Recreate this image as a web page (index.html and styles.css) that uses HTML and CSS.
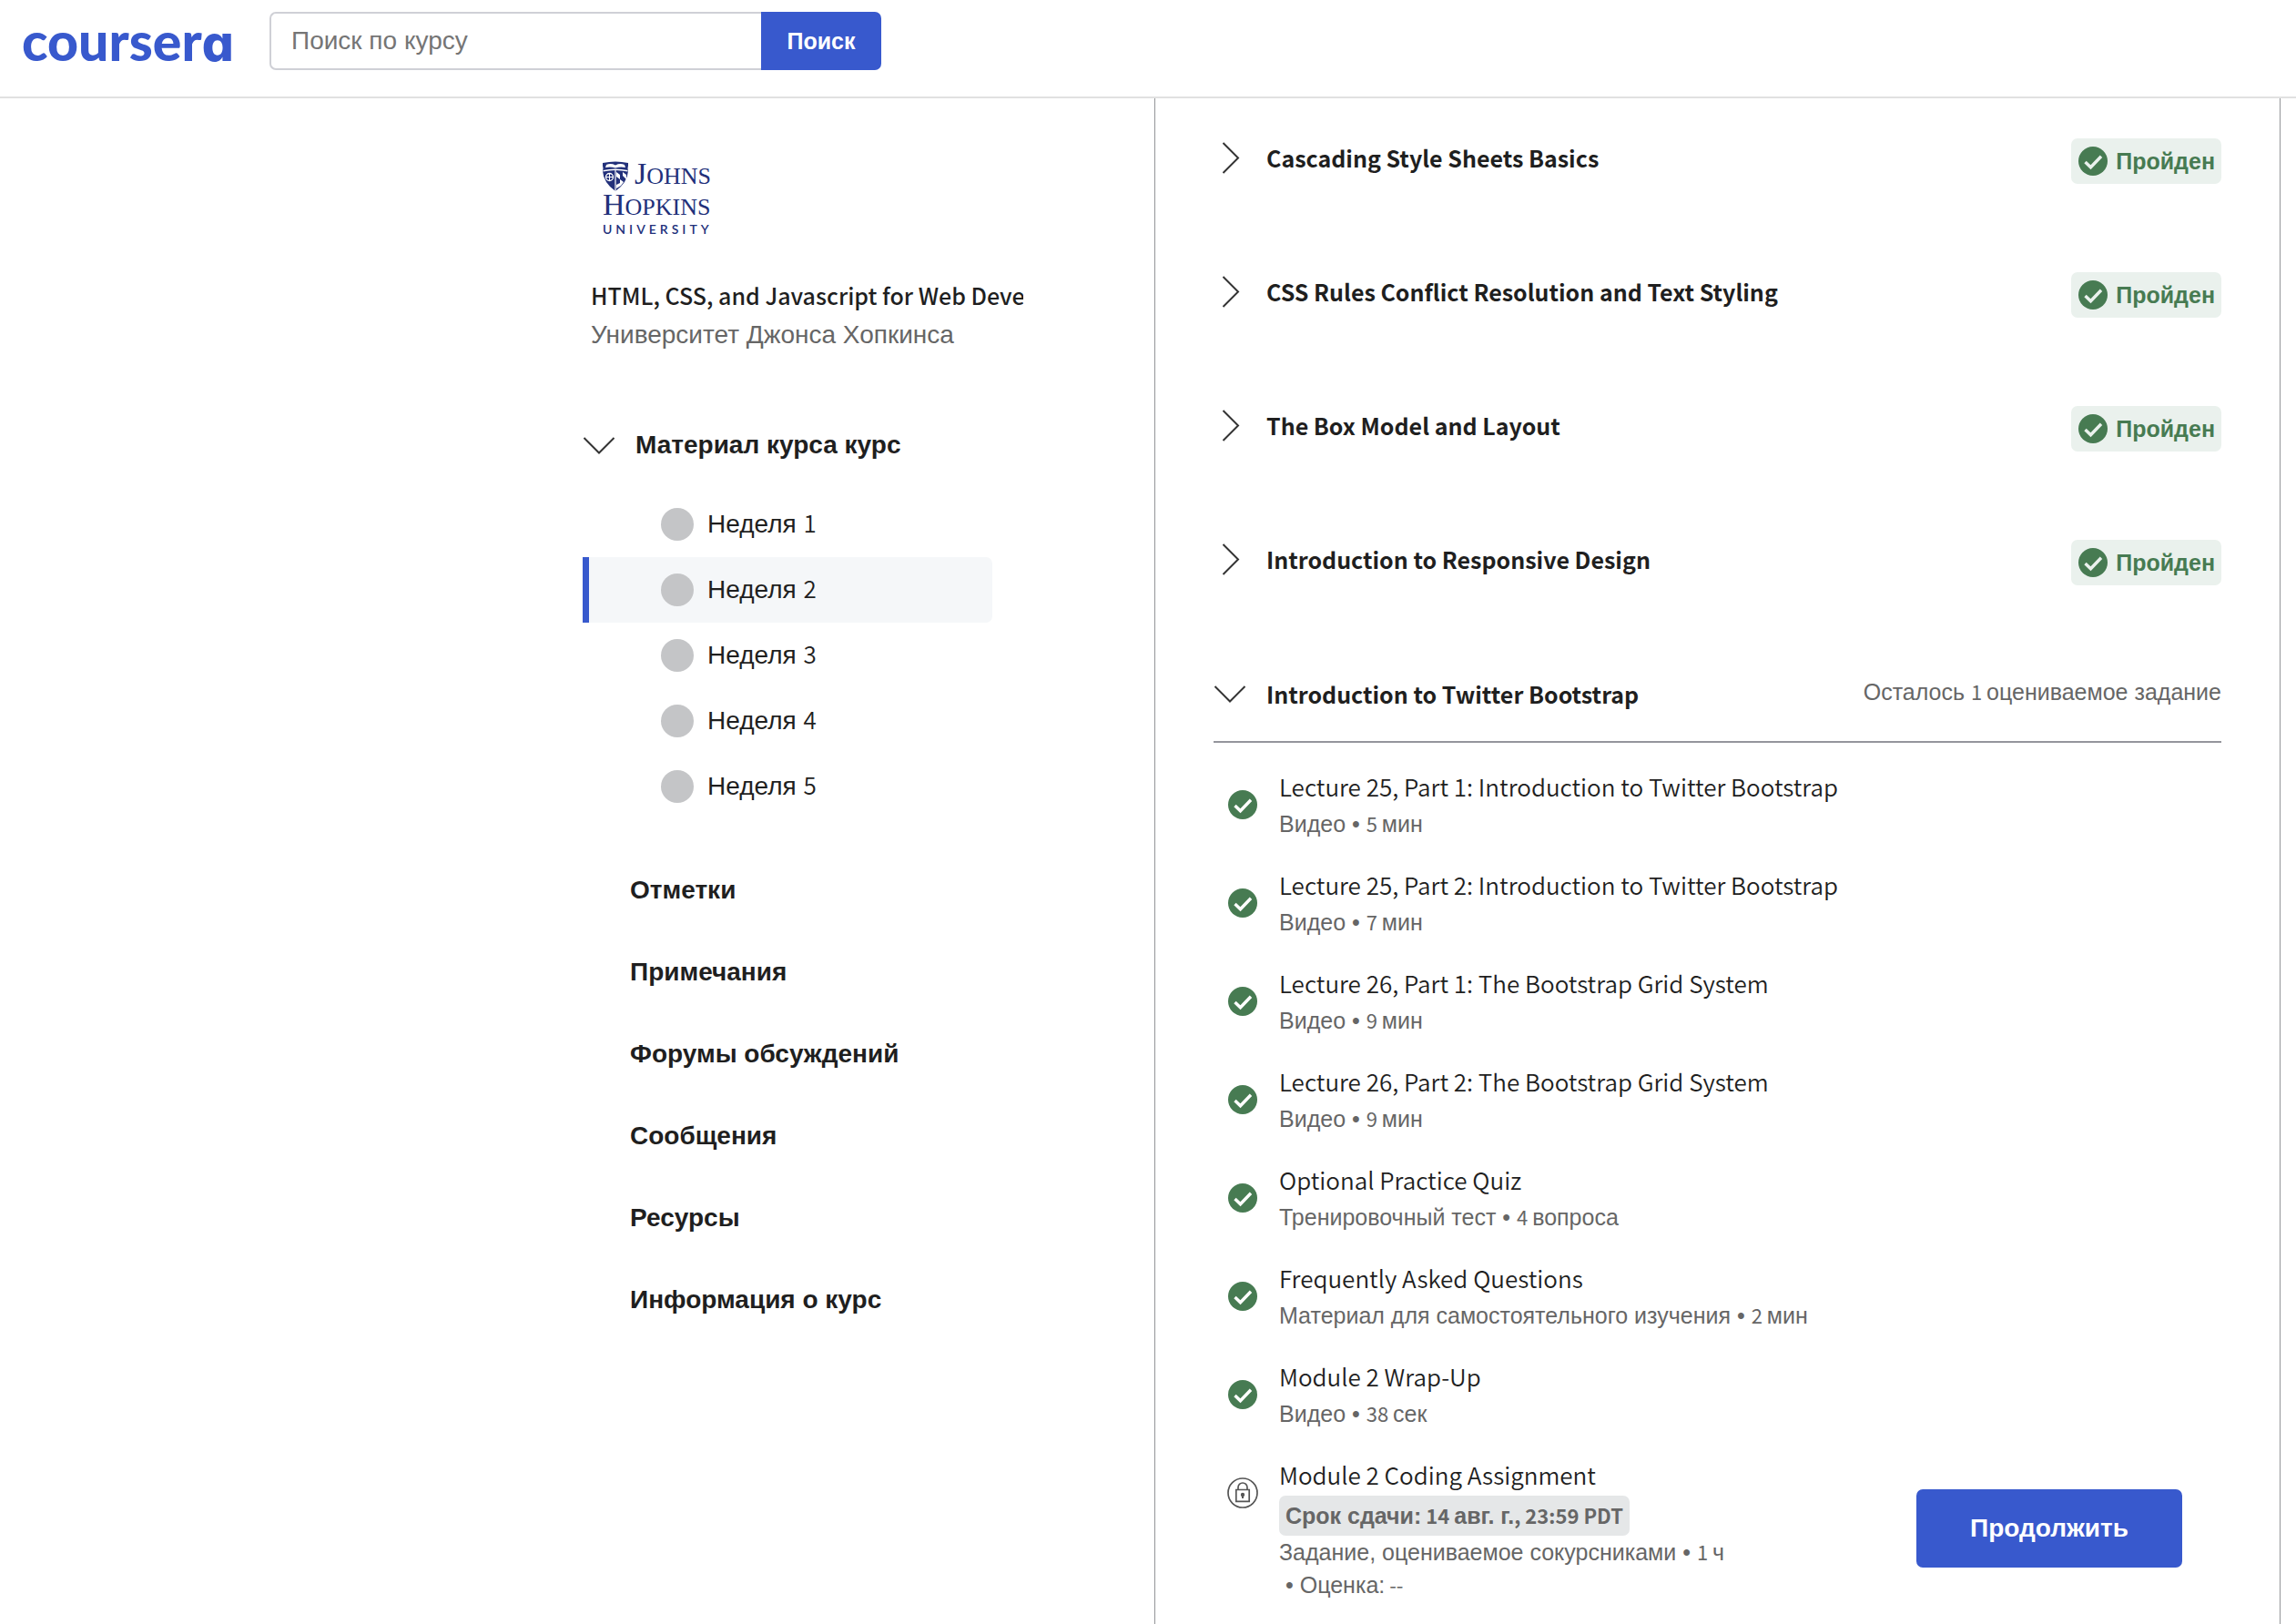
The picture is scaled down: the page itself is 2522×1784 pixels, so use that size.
FILE: index.html
```html
<!DOCTYPE html>
<html lang="ru">
<head>
<meta charset="utf-8">
<meta name="viewport" content="width=device-width, initial-scale=1">
<title>HTML, CSS, and Javascript for Web Developers | Coursera</title>
<link rel="stylesheet" href="styles.css">
</head>
<body>
<svg class="sprite" aria-hidden="true">
  <symbol id="chevron-right" viewBox="0 0 36 36"><path d="M10.500 2 27 18.500 10.500 35" fill="none" stroke="currentColor" stroke-width="2"/></symbol>
  <symbol id="chevron-down" viewBox="0 0 36 36"><path d="M1.500 10 18 26.500 34.500 10" fill="none" stroke="currentColor" stroke-width="2"/></symbol>
  <symbol id="check" viewBox="0 0 32 32"><circle cx="16" cy="16" r="16" fill="currentColor"/><path d="M7.500 17 13.500 22.800 25 10.800" fill="none" stroke="var(--tick)" stroke-width="3.400"/></symbol>
  <symbol id="lock" viewBox="0 0 34 34"><g fill="none" stroke="currentColor" stroke-width="1.700"><circle cx="17" cy="17" r="16"/><path d="M9.800 13.500H24.200V26.300H9.800ZM12 13.500V11a5 5 0 0 1 10 0V13.500"/></g><circle cx="17" cy="19" r="2.200" fill="currentColor"/><path d="M16 19h2v4h-2z" fill="currentColor"/></symbol>
</svg>

<header class="topbar">
  <a class="brand" href="#" aria-label="coursera">courser<span class="brand-a">a</span></a>
  <form class="search" role="search">
    <input class="search-input" type="search" placeholder="Поиск по курсу" aria-label="Поиск по курсу">
    <button class="search-button" type="submit">Поиск</button>
  </form>
</header>

<main class="layout">
  <aside class="sidebar">
    <svg class="jhu" viewBox="0 0 130 90" role="img" aria-label="Johns Hopkins University">
      <g fill="#22307a">
        <path d="M2 3Q16 0 30 3V6Q29 9 30 12Q29 25 16 34Q3 25 2 12Q3 9 2 6Z"/>
        <path d="M2.500 11Q16 8 29.500 11V12.500Q16 9.500 2.500 12.500Z" fill="#fff"/>
        <path d="M6 5Q11 3 16 5.500Q21 3 26 5L27 8Q21 7 16 8.500Q11 7 5 8Z" fill="#fff"/>
        <path d="M15.400 11H16.600V34H15.400Z" fill="#fff"/>
        <circle cx="9.500" cy="18.500" r="4" fill="none" stroke="#fff" stroke-width="1.300"/>
        <path d="M9.500 14.500V22.500M5.500 18.500H13.500" stroke="#fff"/>
        <path d="M17 13 21 16V21L17 18ZM21 21 25 24 22 28 17 31V27L21 25ZM24 13 28 16V21L24 17Z" fill="#fff"/>
        <text class="jhu-serif" x="37" y="26"><tspan class="jhu-cap">J</tspan>OHNS</text>
        <text class="jhu-serif" x="2" y="60"><tspan class="jhu-cap">H</tspan>OPKINS</text>
        <text class="jhu-sans" x="2" y="81">UNIVERSITY</text>
      </g>
    </svg>
    <div class="course">
      <p class="course-name en">HTML, CSS, and Javascript for Web Developers</p>
      <p class="course-school">Университет Джонса Хопкинса</p>
    </div>
    <nav class="course-nav" aria-label="Курс">
      <button class="nav-toggle" type="button" aria-expanded="true"><svg class="chevron"><use href="#chevron-down"/></svg>Материал курса курс</button>
      <ul class="weeks">
        <li><a class="week" href="#"><span class="dot"></span><span>Неделя <span class="en">1</span></span></a></li>
        <li><a class="week week-current" href="#" aria-current="page"><span class="dot"></span><span>Неделя <span class="en">2</span></span></a></li>
        <li><a class="week" href="#"><span class="dot"></span><span>Неделя <span class="en">3</span></span></a></li>
        <li><a class="week" href="#"><span class="dot"></span><span>Неделя <span class="en">4</span></span></a></li>
        <li><a class="week" href="#"><span class="dot"></span><span>Неделя <span class="en">5</span></span></a></li>
      </ul>
      <ul class="links">
        <li><a class="link" href="#">Отметки</a></li>
        <li><a class="link" href="#">Примечания</a></li>
        <li><a class="link" href="#">Форумы обсуждений</a></li>
        <li><a class="link" href="#">Сообщения</a></li>
        <li><a class="link" href="#">Ресурсы</a></li>
        <li><a class="link" href="#">Информация о курс</a></li>
      </ul>
    </nav>
  </aside>

  <section class="panel">
    <div class="module">
      <button class="module-toggle en" type="button" aria-expanded="false"><svg class="chevron"><use href="#chevron-right"/></svg>Cascading Style Sheets Basics</button>
      <span class="passed"><svg class="check"><use href="#check"/></svg>Пройден</span>
    </div>
    <div class="module">
      <button class="module-toggle en" type="button" aria-expanded="false"><svg class="chevron"><use href="#chevron-right"/></svg>CSS Rules Conflict Resolution and Text Styling</button>
      <span class="passed"><svg class="check"><use href="#check"/></svg>Пройден</span>
    </div>
    <div class="module">
      <button class="module-toggle en" type="button" aria-expanded="false"><svg class="chevron"><use href="#chevron-right"/></svg>The Box Model and Layout</button>
      <span class="passed"><svg class="check"><use href="#check"/></svg>Пройден</span>
    </div>
    <div class="module">
      <button class="module-toggle en" type="button" aria-expanded="false"><svg class="chevron"><use href="#chevron-right"/></svg>Introduction to Responsive Design</button>
      <span class="passed"><svg class="check"><use href="#check"/></svg>Пройден</span>
    </div>
    <div class="module module-open">
      <button class="module-toggle en" type="button" aria-expanded="true"><svg class="chevron"><use href="#chevron-down"/></svg>Introduction to Twitter Bootstrap</button>
      <span class="remaining">Осталось <span class="en">1 </span>оцениваемое задание</span>
    </div>

    <ul class="items">
      <li class="item"><svg class="check"><use href="#check"/></svg>
        <div><a class="item-title en" href="#">Lecture 25, Part 1: Introduction to Twitter Bootstrap</a>
        <p class="meta">Видео • <span class="en">5 </span>мин</p></div></li>
      <li class="item"><svg class="check"><use href="#check"/></svg>
        <div><a class="item-title en" href="#">Lecture 25, Part 2: Introduction to Twitter Bootstrap</a>
        <p class="meta">Видео • <span class="en">7 </span>мин</p></div></li>
      <li class="item"><svg class="check"><use href="#check"/></svg>
        <div><a class="item-title en" href="#">Lecture 26, Part 1: The Bootstrap Grid System</a>
        <p class="meta">Видео • <span class="en">9 </span>мин</p></div></li>
      <li class="item"><svg class="check"><use href="#check"/></svg>
        <div><a class="item-title en" href="#">Lecture 26, Part 2: The Bootstrap Grid System</a>
        <p class="meta">Видео • <span class="en">9 </span>мин</p></div></li>
      <li class="item"><svg class="check"><use href="#check"/></svg>
        <div><a class="item-title en" href="#">Optional Practice Quiz</a>
        <p class="meta">Тренировочный тест • <span class="en">4 </span>вопроса</p></div></li>
      <li class="item"><svg class="check"><use href="#check"/></svg>
        <div><a class="item-title en" href="#">Frequently Asked Questions</a>
        <p class="meta">Материал для самостоятельного изучения • <span class="en">2 </span>мин</p></div></li>
      <li class="item"><svg class="check"><use href="#check"/></svg>
        <div><a class="item-title en" href="#">Module 2 Wrap-Up</a>
        <p class="meta">Видео • <span class="en">38 </span>сек</p></div></li>
      <li class="item"><svg class="lock"><use href="#lock"/></svg>
        <div><a class="item-title en" href="#">Module 2 Coding Assignment</a>
        <span class="deadline">Срок сдачи:<span class="en"> 14 </span>авг. г.<span class="en">, 23:59 PDT</span></span>
        <p class="meta">Задание, оцениваемое сокурсниками • <span class="en">1 </span>ч</p>
        <p class="meta grade">• Оценка:<span class="en"> --</span></p></div>
        <button class="continue" type="button">Продолжить</button></li>
    </ul>
  </section>
</main>
</body>
</html>
```
FILE: styles.css
```css
:root {
  --blue: #3859cd;
  --green: #477b52;
  --ink: #1f1f1f;
  --muted: #666;
  --tick: #fff;
  --latin: "Noto Sans CJK SC", "Noto Sans", sans-serif;
}

* { box-sizing: border-box; }

body {
  margin: 0;
  background: #fff;
  color: var(--ink);
  font: 28px/40px "Liberation Sans", Arial, sans-serif;
}

p, ul { margin: 0; padding: 0; }
ul { list-style: none; }
a { color: inherit; text-decoration: none; }
button { border: 0; padding: 0; background: none; color: inherit; font: inherit; cursor: pointer; }

.sprite { position: absolute; width: 0; height: 0; }
.en { font-family: var(--latin); font-size: 25px; }
span.en { line-height: 1; }

/* top bar */
.topbar {
  display: flex;
  align-items: flex-start;
  gap: 42px;
  height: 108px;
  padding: 13px 24px 0;
  border-bottom: 2px solid #e1e1e1;
}
.brand { width: 230px; color: var(--blue); font: 900 59px/64px Lato, sans-serif; }
.brand-a { font: 800 55px/1 Inter, sans-serif; font-feature-settings: "cv11"; }
.search { display: flex; height: 64px; }
.search-input {
  width: 540px;
  padding: 0 22px;
  border: 2px solid #cfd0d6;
  border-right: 0;
  border-radius: 7px 0 0 7px;
  background: #fff;
  color: var(--ink);
  font: inherit;
  appearance: none;
}
.search-input::placeholder { color: #757575; opacity: 1; }
.search-button {
  width: 132px;
  border-radius: 0 7px 7px 0;
  background: var(--blue);
  color: #fff;
  font-size: 25px;
  font-weight: 700;
}

/* columns */
.layout {
  display: grid;
  grid-template-columns: minmax(0, 628px) minmax(0, 1237px);
  justify-content: end;
  min-height: calc(100vh - 108px);
  padding-right: 17px;
}

.chevron { flex: none; width: 36px; height: 36px; color: #333; }

/* sidebar */
.sidebar { padding: 68px 144px 0 0; }
.jhu { display: block; width: 130px; height: 90px; margin-left: 20px; }
.jhu-serif { font: 26px "Liberation Serif", serif; }
.jhu-cap { font-size: 34px; }
.jhu-sans { font: 600 14px Lato, sans-serif; letter-spacing: 4px; }
.course { margin: 38px 0 0 9px; }
.course-name { overflow: hidden; height: 42px; line-height: 40px; font-weight: 500; white-space: nowrap; }
.course-school { height: 42px; line-height: 44px; color: var(--muted); }
.course-nav { margin-top: 81px; width: 450px; }
.nav-toggle { display: flex; align-items: center; gap: 22px; font-weight: 700; }
.weeks { padding-top: 31px; }
.week { display: flex; align-items: center; gap: 15px; height: 72px; padding-left: 86px; }
.week .en { font-size: 26px; font-weight: 350; }
.week-current {
  padding-left: 79px;
  border-left: 7px solid var(--blue);
  border-radius: 0 7px 7px 0;
  background: #f5f7f9;
}
.dot { width: 36px; height: 36px; border-radius: 50%; background: #c4c5c7; }
.links { padding: 33px 0 0 52px; }
.link { display: block; height: 90px; line-height: 90px; font-weight: 700; }

/* module panel */
.panel { padding: 44px 64px 24px; border: solid #939598; border-width: 0 1px; }
.module { display: flex; justify-content: space-between; align-items: flex-start; height: 147px; }
.module-toggle { display: flex; align-items: center; gap: 22px; height: 42px; font-weight: 700; }
.module-open { height: 76px; border-bottom: 2px solid #94959c; }
.module-open .module-toggle { height: 44px; }
.passed {
  --tick: #eaf1ed;
  display: flex;
  align-items: center;
  gap: 9px;
  height: 50px;
  padding: 0 7px 0 8px;
  border-radius: 7px;
  background: #eaf1ed;
  color: var(--green);
  font-size: 25px;
  font-weight: 700;
}
.check { flex: none; width: 32px; height: 32px; color: var(--green); }
.remaining, .meta { color: var(--muted); font-size: 25px; }
.remaining .en, .meta .en, .deadline .en { font-size: 22px; }

.items { display: grid; gap: 28px; padding: 27px 0 0 16px; }
.item { display: flex; align-items: flex-start; gap: 24px; }
.item .check { margin-top: 25px; }
.lock { flex: none; width: 34px; height: 34px; margin: 24px -1px 0; color: #555; }
.item-title { display: block; height: 44px; font-size: 26px; font-weight: 350; line-height: 42px; }
.meta { height: 36px; line-height: 36px; }
.deadline {
  display: block;
  width: fit-content;
  height: 44px;
  padding: 0 7px;
  border-radius: 7px;
  background: #e5e7e8;
  color: var(--muted);
  font-size: 25px;
  font-weight: 700;
  line-height: 44px;
}
.grade { padding-left: 7px; }
.continue {
  align-self: center;
  width: 292px;
  height: 86px;
  margin: 0 43px 0 auto;
  border-radius: 7px;
  background: var(--blue);
  color: #fff;
  font-weight: 700;
}
```
